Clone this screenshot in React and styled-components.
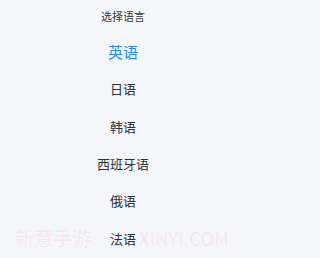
import styled, { createGlobalStyle } from "styled-components";

const GlobalStyle = createGlobalStyle`
  html, body {
    margin: 0;
    padding: 0;
    background: #f5f6fa;
  }
  body {
    font-family: "Noto Sans CJK SC", "Noto Sans", sans-serif;
  }
`;

const Page = styled.div`
  position: relative;
  width: 246px;
  height: 258px;
  overflow: hidden;
  background: #f5f6fa;
`;

const Header = styled.div`
  height: 31px;
  display: flex;
  align-items: center;
  justify-content: center;
  font-size: 11px;
  color: #343a45;
`;

const List = styled.ul`
  list-style: none;
  margin: 0;
  padding: 2px 0 0;
`;

const Item = styled.li`
  height: 37.3px;
  display: flex;
  align-items: center;
  justify-content: center;
  font-size: ${(p) => (p.active ? "15px" : "13px")};
  color: ${(p) => (p.active ? "#1f8bf5" : "#2c323d")};
  position: relative;
  z-index: 1;
`;

const Watermark = styled.div`
  position: absolute;
  left: 15px;
  top: 224px;
  display: flex;
  align-items: center;
  font-family: "Noto Sans CJK SC", "Noto Sans", sans-serif;
  font-size: 19px;
  color: rgba(250, 110, 180, 0.13);
  white-space: nowrap;
  pointer-events: none;
`;

const Dot = styled.span`
  margin: 0 18px 0 11px;
`;

const Site = styled.span`
  font-size: 18px;
  letter-spacing: 0.3px;
`;

const languages = ["英语", "日语", "韩语", "西班牙语", "俄语", "法语"];

export default function App() {
  return (
    <>
      <GlobalStyle />
      <Page>
        <Header>选择语言</Header>
        <List>
          {languages.map((lang, i) => (
            <Item key={lang} active={i === 0}>
              {lang}
            </Item>
          ))}
        </List>
        <Watermark>
          <span>新意手游</span>
          <Dot>·</Dot>
          <Site>XINYI.COM</Site>
        </Watermark>
      </Page>
    </>
  );
}
